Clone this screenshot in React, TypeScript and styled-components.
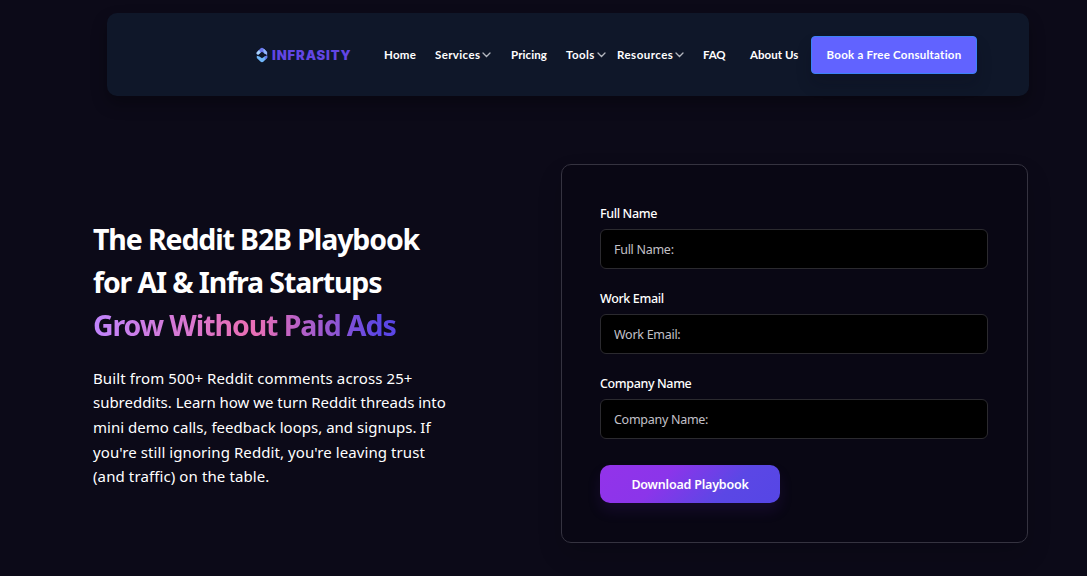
import React from "react";
import styled, { createGlobalStyle } from "styled-components";

const GlobalStyle = createGlobalStyle`
  * { box-sizing: border-box; }
  body { margin: 0; background: #0c0a18; }
`;

const Page = styled.div`
  height: 576px;
  overflow: hidden;
  padding: 13px 58px 0 93px;
  background: #0c0a18;
  color: #fff;
  font-family: "Noto Sans", "Open Sans", sans-serif;
`;

const Header = styled.header`
  display: flex;
  align-items: center;
  height: 83px;
  margin-left: 14px;
  padding: 0 52px 0 149px;
  border-radius: 10px;
  background: #0f1729;
  box-shadow: 0 8px 16px rgba(0, 0, 0, 0.3);
  font-family: Lato, sans-serif;
`;

const Brand = styled.a`
  display: flex;
  align-items: center;
  gap: 4px;
  width: 128px;
  color: #6246e4;
`;

const BrandName = styled.span`
  font-family: Inter, sans-serif;
  font-size: 13px;
  font-weight: 900;
  line-height: 16px;
  letter-spacing: 0.9px;
`;

const Nav = styled.nav`
  display: flex;
  align-items: center;
  flex: 1;
`;

const NavLink = styled.a<{ $width: number; $track: number }>`
  display: flex;
  align-items: center;
  gap: 2px;
  flex: none;
  width: ${(p) => p.$width}px;
  font-size: 11.5px;
  font-weight: 700;
  line-height: 16px;
  letter-spacing: ${(p) => p.$track}px;
  white-space: nowrap;
`;

const Consult = styled.button`
  flex: none;
  width: 166px;
  height: 38px;
  padding: 0;
  border: 1px solid #3b82f6;
  border-radius: 4px;
  background: #6163ff;
  box-shadow: 0 10px 15px rgba(12, 10, 24, 0.2);
  color: #fff;
  font: 700 11.5px/16px Lato, sans-serif;
  letter-spacing: 0.25px;
  white-space: nowrap;
`;

const Main = styled.main`
  display: flex;
  justify-content: space-between;
  align-items: flex-start;
  padding: 68px 1px 0 0;
`;

const Intro = styled.section`
  width: 400px;
  padding-top: 54px;
`;

const Title = styled.h1`
  margin: 0;
  font-size: 28.5px;
  font-weight: 700;
  line-height: 43px;
`;

const TitleLine = styled.span<{ $track: number }>`
  display: block;
  width: max-content;
  letter-spacing: ${(p) => p.$track}px;
  white-space: nowrap;
`;

const Accent = styled(TitleLine)`
  background: linear-gradient(90deg, #c084fc 0%, #e86fb6 50%, #e86fb6 54%, #5b46e5 95%);
  background-clip: text;
  -webkit-background-clip: text;
  color: transparent;
`;

const Copy = styled.p`
  margin: 18.6px 0 0;
  font-size: 15px;
  line-height: 24.7px;
`;

const CopyLine = styled.span<{ $track: number }>`
  display: block;
  letter-spacing: ${(p) => p.$track}px;
  white-space: nowrap;
`;

const Card = styled.form`
  width: 467px;
  height: 379px;
  padding: 38px 39px 0 38px;
  border: 1px solid #353340;
  border-radius: 10px;
  background: #090714;
  box-shadow: 0 12px 24px rgba(0, 0, 0, 0.15);
`;

const Field = styled.label`
  display: block;
  height: 85px;
`;

const Caption = styled.span`
  display: block;
  height: 26px;
  padding-top: 1px;
  font-size: 12.5px;
  font-weight: 500;
  line-height: 20px;
  letter-spacing: -0.37px;
`;

const Input = styled.input`
  display: block;
  width: 388px;
  height: 40px;
  padding: 0 13px;
  border: 1px solid #2b2a2f;
  border-radius: 6px;
  background: #000;
  color: #fff;
  font: 400 12.5px "Noto Sans", sans-serif;
  letter-spacing: -0.28px;
  &::placeholder { color: #c3c1c9; opacity: 1; }
`;

const Submit = styled.button`
  display: block;
  width: 180px;
  height: 38px;
  margin-top: 7px;
  padding: 0;
  border: 0;
  border-radius: 10px;
  background: linear-gradient(135deg, #9333ea 0%, #8b35ea 35%, #5b47e5 70%, #5546e5 100%);
  box-shadow: 0 8px 14px rgba(100, 40, 190, 0.13);
  color: #fff;
  font: 600 12.5px "Noto Sans", sans-serif;
  letter-spacing: -0.2px;
`;

const BrandMark = () => (
  <svg width="12" height="16" viewBox="0 0 12 16">
    <path d="M.6 5.4 4.4 1.4Q6 .2 7.6 1.4L11.2 5v3L8.4 6.6 6 4.8 3.5 6.6 2.2 7.8.6 7Z" fill="#6a78ee" />
    <path d="M.6 5.4 3 3l1.6 2.8L2.2 7.8.6 7Z" fill="#a9d4fa" />
    <path d="m7 2.4 1.6-.2 2.4 3v2.6L8.4 6.6Z" fill="#93b8f8" />
    <path d="M.8 8.8 3.4 9.6 6 11.2l2.6-1.8L11.2 8.4v2.4L7.6 14.6Q6 15.8 4.4 14.6L.8 11Z" fill="#70b7fa" />
    <path d="m8.6 9.4 2.6-1v2.4L9 13Z" fill="#6579ed" />
  </svg>
);

const Chevron = () => (
  <svg width="9" height="6" viewBox="0 0 9 6" fill="none" stroke="#b4b7bf" strokeWidth="1.3" strokeLinecap="round">
    <path d="m1 1 3.5 3.5L8 1" />
  </svg>
);

const links = [
  { label: "Home", width: 51, track: 0.25, menu: false },
  { label: "Services", width: 76, track: 0.38, menu: true },
  { label: "Pricing", width: 55, track: 0.1, menu: false },
  { label: "Tools", width: 51, track: 0.4, menu: true },
  { label: "Resources", width: 86, track: 0.48, menu: true },
  { label: "FAQ", width: 47, track: -0.1, menu: false },
  { label: "About Us", width: 61, track: 0.05, menu: false },
];

const copy = [
  { text: "Built from 500+ Reddit comments across 25+", track: 0.11 },
  { text: "subreddits. Learn how we turn Reddit threads into", track: -0.02 },
  { text: "mini demo calls, feedback loops, and signups. If", track: 0.02 },
  { text: "you're still ignoring Reddit, you're leaving trust", track: 0.08 },
  { text: "(and traffic) on the table.", track: 0.11 },
];

export default function App() {
  return (
    <Page>
      <GlobalStyle />
      <Header>
        <Brand>
          <BrandMark />
          <BrandName>INFRASITY</BrandName>
        </Brand>
        <Nav>
          {links.map((l) => (
            <NavLink key={l.label} $width={l.width} $track={l.track}>
              {l.label}
              {l.menu && <Chevron />}
            </NavLink>
          ))}
          <Consult>Book a Free Consultation</Consult>
        </Nav>
      </Header>
      <Main>
        <Intro>
          <Title>
            <TitleLine $track={-1.12}>The Reddit B2B Playbook</TitleLine>
            <TitleLine $track={-1.13}>for AI &amp; Infra Startups</TitleLine>
            <Accent $track={-1.1}>Grow Without Paid Ads</Accent>
          </Title>
          <Copy>
            {copy.map((c) => (
              <CopyLine key={c.text} $track={c.track}>{c.text}</CopyLine>
            ))}
          </Copy>
        </Intro>
        <Card>
          {["Full Name", "Work Email", "Company Name"].map((name) => (
            <Field key={name}>
              <Caption>{name}</Caption>
              <Input placeholder={`${name}:`} />
            </Field>
          ))}
          <Submit type="button">Download Playbook</Submit>
        </Card>
      </Main>
    </Page>
  );
}
